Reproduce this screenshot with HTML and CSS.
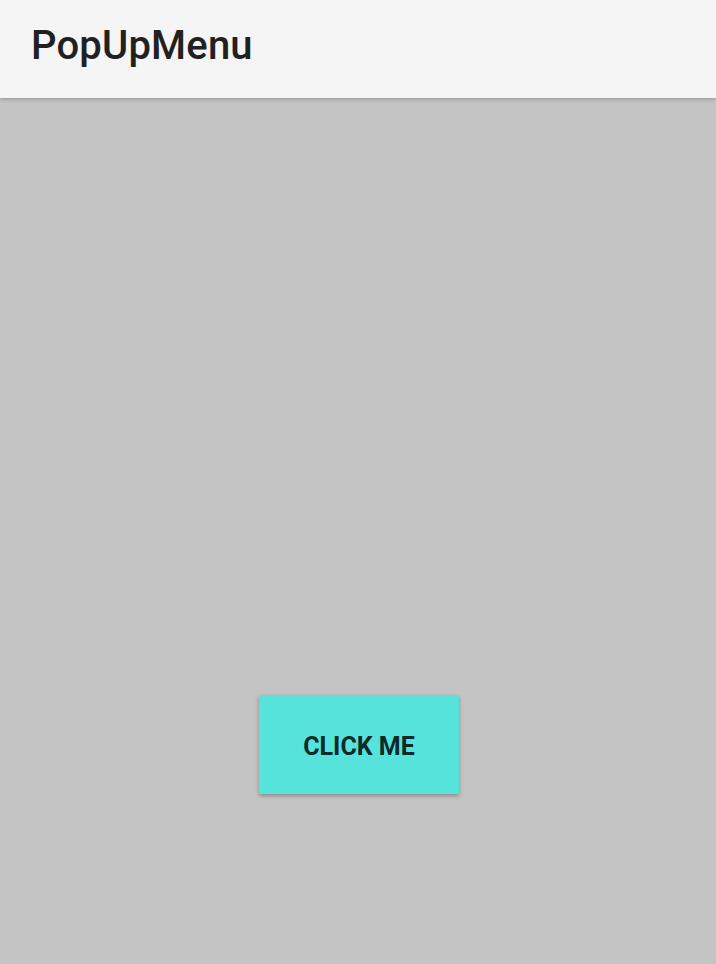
FILE: index.html
```html
<!DOCTYPE html>
<html>
<head>
<meta charset="utf-8">
<link rel="stylesheet" href="styles.css">
</head>
<body>
<header class="appbar"><h1 class="title">PopUpMenu</h1></header>
<main class="content">
  <button class="btn">CLICK ME</button>
</main>
</body>
</html>
```
FILE: styles.css
```css
html, body { margin: 0; padding: 0; height: 100%; }
body {
  background: #c4c4c4;
  font-family: Roboto, "Noto Sans", sans-serif;
  display: flex;
  flex-direction: column;
}
.appbar {
  height: 98px;
  background: #f5f5f5;
  box-shadow: 0 1px 4px rgba(0,0,0,0.25);
  display: flex;
  align-items: center;
  padding-left: 31px;
  position: relative;
  z-index: 1;
}
.title {
  margin: 0 0 7px 0;
  font-size: 40px;
  font-weight: 500;
  letter-spacing: 0.2px;
  color: #212121;
}
.content {
  flex: 1;
  display: flex;
  justify-content: center;
  align-items: flex-start;
  padding-top: 597px;
}
.btn {
  width: 200px;
  height: 99px;
  margin-left: 2px;
  border: none;
  background: #55e3dc;
  color: #0b2a28;
  font-family: Roboto, sans-serif;
  font-weight: 700;
  font-size: 25px;
  line-height: 1;
  padding: 4px 0 0 0;
  box-shadow: 0 2px 4px rgba(0,0,0,0.3);
}
```
